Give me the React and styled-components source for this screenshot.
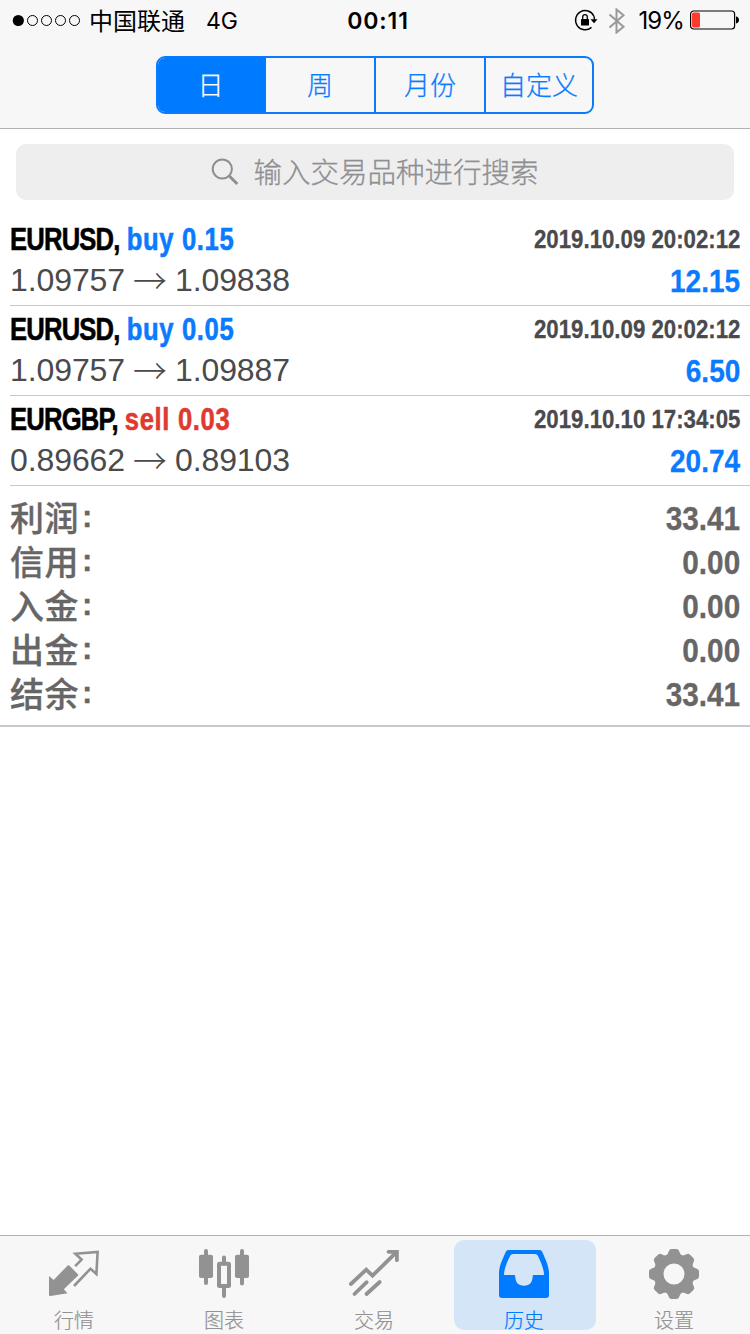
import React from "react";
import styled, { createGlobalStyle } from "styled-components";

const GlobalStyle = createGlobalStyle`
  * {
    box-sizing: border-box;
  }
  body {
    margin: 0;
    background: #fff;
    --cjk-font: "Noto Sans CJK SC", sans-serif;
    --main-font: "Liberation Sans", "Noto Sans CJK SC", sans-serif;
    --status-font: "Inter", "Noto Sans CJK SC", sans-serif;
    font-family: var(--main-font);
  }
`;

const Screen = styled.div`
  width: 750px;
  height: 1334px;
  display: flex;
  flex-direction: column;
  overflow: hidden;
  white-space: nowrap;
`;

const Header = styled.header`
  height: 129px;
  background: #f7f7f7;
  border-bottom: 1px solid #b2b2b2;
`;

const StatusBar = styled.div`
  height: 40px;
  padding: 0 11px 0 12px;
  display: grid;
  grid-template-columns: 1fr auto 1fr;
  align-items: center;
  font-family: var(--status-font);
  font-size: 24px;
  line-height: 38px;
  color: #000;
`;

const StatusLeft = styled.div`
  display: flex;
  align-items: center;
`;

const StatusRight = styled.div`
  display: flex;
  align-items: center;
  justify-content: flex-end;
`;

const Carrier = styled.span`
  margin: 0 21px 0 8px;
  font-family: var(--cjk-font);
`;

const Network = styled.span`
  padding-top: 2px;
  font-size: 23px;
`;

const Clock = styled.span`
  padding: 2px 0 0 5px;
  font-weight: 600;
  font-size: 23px;
  letter-spacing: 0.9px;
`;

const Percent = styled.span`
  padding-top: 2px;
  margin: 0 6px 0 12px;
  font-size: 24px;
  letter-spacing: -0.9px;
`;

const Segments = styled.div`
  width: 438px;
  height: 58px;
  margin: 16px 0 0 156px;
  display: flex;
  border: 2px solid #0a7aff;
  border-radius: 9px;
  overflow: hidden;
`;

const Segment = styled.button`
  width: ${(props) => props.$width}px;
  padding: 0 ${(props) => (props.$active ? "3px" : "0")} 2px 0;
  border: 0;
  border-left: ${(props) => (props.$divided ? "2px solid #0a7aff" : "0")};
  background: ${(props) => (props.$active ? "#007aff" : "transparent")};
  color: ${(props) => (props.$active ? "#fff" : "#0a7aff")};
  font-family: var(--cjk-font);
  font-weight: 300;
  font-size: 26px;
  line-height: 52px;
  -webkit-text-stroke: 0.25px currentColor;
`;

const SearchBox = styled.div`
  height: 56px;
  margin: 15px 16px 16px;
  display: flex;
  align-items: center;
  justify-content: center;
  border-radius: 10px;
  background: #eee;
  color: #8e8e93;

  svg {
    margin-right: 14px;
  }
`;

const Placeholder = styled.span`
  padding-bottom: 3px;
  font-family: var(--cjk-font);
  font-weight: 300;
  font-size: 28.5px;
  line-height: 52px;
  -webkit-text-stroke: 0.3px currentColor;
`;

const Deal = styled.div`
  height: 90px;
  margin-left: 10px;
  padding-right: 10px;
  border-bottom: 1px solid #c8c7cc;
`;

const DealLine = styled.div`
  height: ${(props) => props.$height};
  display: flex;
  align-items: center;
  justify-content: space-between;
`;

/* squeezes the bold sans into a condensed face */
const Condensed = styled.span`
  font-family: var(--main-font);
  font-weight: 700;
  transform: scaleX(${(props) => props.$scale});
  transform-origin: ${(props) => props.$origin || "right"} center;
  -webkit-text-stroke: 0.3px currentColor;
`;

const DealTitle = styled(Condensed)`
  font-size: 32px;
  letter-spacing: -1px;
  color: #000;
  -webkit-text-stroke-width: 0.6px;
`;

const Side = styled.span`
  margin-left: 1px;
  color: ${(props) => (props.$side === "sell" ? "#e03a30" : "#0a7aff")};
  letter-spacing: 0.8px;
  -webkit-text-stroke-color: currentColor;
`;

const DealTime = styled(Condensed)`
  font-size: 26px;
  color: #4a4a4d;
`;

const Prices = styled.span`
  padding-bottom: 2px;
  display: flex;
  align-items: center;
  font-size: 32px;
  line-height: 36px;
  letter-spacing: -0.1px;
  color: #4a4a4d;
`;

const Arrow = styled.span`
  width: 50px;
  text-align: center;
  font-family: var(--cjk-font);
  font-weight: 300;
  font-size: 34px;
  line-height: 36px;
`;

const Profit = styled(Condensed)`
  padding-top: 2px;
  font-size: 32px;
  color: #0a7aff;
`;

const Summary = styled.section`
  height: 241px;
  padding: 10px 10px 0;
  border-bottom: 2px solid #c8c7cc;
`;

const SummaryRow = styled.div`
  height: 44px;
  display: flex;
  align-items: center;
  justify-content: space-between;
  color: #666;
`;

const SummaryLabel = styled.span`
  padding-top: 2px;
  font-family: var(--main-font);
  font-weight: 500;
  font-size: 34px;
  line-height: 42px;
  letter-spacing: 0.5px;
  -webkit-text-stroke: 0.3px currentColor;
`;

const Colon = styled.span`
  padding-left: 3px;
  font-weight: 700;
  font-size: 31px;
  line-height: 1;
  vertical-align: 4px;
`;

const SummaryValue = styled(Condensed)`
  font-size: 34px;
`;

const TabBar = styled.nav`
  height: 99px;
  margin-top: auto;
  padding: 4px 0 4px;
  display: flex;
  background: #f7f7f7;
  border-top: 1px solid #b2b2b2;
`;

const Tab = styled.a`
  width: 142px;
  height: 90px;
  margin-left: ${(props) => (props.$first ? "4px" : "8px")};
  padding: 9px 2px 0 0;
  display: flex;
  flex-direction: column;
  align-items: center;
  flex-shrink: 0;
  border-radius: 10px;
  background: ${(props) => (props.$active ? "#d3e5f7" : "transparent")};
  color: ${(props) => (props.$active ? "#007aff" : "#929292")};

  svg {
    flex-shrink: 0;
  }
`;

const TabLabel = styled.span`
  margin-top: 7px;
  font-family: var(--cjk-font);
  font-weight: 300;
  font-size: 20px;
  line-height: 28px;
  -webkit-text-stroke: 0.2px currentColor;
`;

function SignalDots() {
  return (
    <svg width="69" height="14" viewBox="0 0 69 14">
      <circle cx="6.3" cy="7.5" r="5.6" fill="#000" />
      {[20.5, 34.5, 48.5, 62.5].map((x) => (
        <circle key={x} cx={x} cy="7.5" r="5" fill="none" stroke="#000" />
      ))}
    </svg>
  );
}

function RotationLock() {
  return (
    <svg width="24" height="24" viewBox="0 0 24 24">
      <path
        d="M19.9 8.2A9.6 9.6 0 1 0 17.5 19.4"
        fill="none"
        stroke="#000"
        strokeWidth="1.4"
      />
      <path d="M16.5 11.2h7L20 15.2z" fill="#000" />
      <path d="M19.9 8.2q.6 1.6.5 3.5" fill="none" stroke="#000" strokeWidth="1.4" />
      <rect x="7" y="11" width="8" height="6.5" rx="0.6" fill="#000" />
      <path
        d="M8.7 11.5V9a2.3 2.3 0 0 1 4.6 0v2.5"
        fill="none"
        stroke="#000"
        strokeWidth="1.3"
      />
    </svg>
  );
}

const BluetoothMark = styled.svg`
  margin: 1px 0 0 10px;
`;

function Bluetooth() {
  return (
    <BluetoothMark width="18" height="26" viewBox="0 0 18 26">
      <path
        d="M1.500 6.500l14 12.300-7 5.700v-23l7 5.700-14 12.300"
        fill="none"
        stroke="#999"
        strokeWidth="2"
      />
    </BluetoothMark>
  );
}

function Battery() {
  return (
    <svg width="49" height="20" viewBox="0 0 49 20">
      <rect x="0.600" y="1" width="44" height="18" rx="3" fill="none" stroke="#000" strokeWidth="1.200" />
      <rect x="2" y="2.500" width="8" height="15" rx="1.500" fill="#ff3b30" />
      <path d="M46 6.500c4 .3 4 6.700 0 7z" fill="#000" />
    </svg>
  );
}

function SearchIcon() {
  return (
    <svg width="28" height="28" viewBox="0 0 28 28">
      <circle cx="11.300" cy="11" r="9.600" fill="none" stroke="#8e8e93" strokeWidth="2" />
      <path d="M18 17.700l8.300 8.300" stroke="#8e8e93" strokeWidth="3" />
    </svg>
  );
}

function QuotesIcon() {
  return (
    <>
      <path
        d="M0 27l4.600 4L18.700 16.500q.8-.7 1.600 0l8.600 8.700q.7.8 0 1.600L14.800 40.300l3.700 3.900L1.500 47Q0 47.200 0 45.500z"
        fill="currentColor"
      />
      <path
        d="M26.200 17.200l6.400-6.600-6.200-5.900L48.600 3l-1.200 22-5.900-5.300L25 37"
        fill="none"
        stroke="currentColor"
        strokeWidth="2.600"
      />
    </>
  );
}

function ChartsIcon() {
  return (
    <>
      <g stroke="currentColor" strokeWidth="4" strokeLinecap="round">
        <path d="M7 2v32M43 2v32.500M25 8.500v6M25 38v9" />
      </g>
      <rect x="0" y="5.700" width="14" height="23.300" rx="2" fill="currentColor" />
      <rect x="36" y="5.700" width="14" height="23.300" rx="2" fill="currentColor" />
      <rect x="20" y="14.700" width="10" height="22.300" rx="0.500" fill="none" stroke="currentColor" strokeWidth="4" />
    </>
  );
}

function TradeIcon() {
  return (
    <g fill="none" stroke="currentColor" strokeWidth="3.800" strokeLinecap="round">
      <path d="M1.900 35l15.300-14.300 6.300 6L47 3.600" />
      <path d="M39.500 2.800h8.400v8.400" />
      <path d="M5.500 45l12.200-11.800M17.500 45l13.200-12" />
    </g>
  );
}

function HistoryIcon() {
  return (
    <path
      fillRule="evenodd"
      fill="currentColor"
      d="M9.500 1h31q2 0 2.800 2C46 9.500 50 17 50 24v22q0 3-3 3H3q-3 0-3-3V24C0 17 4 9.500 6.700 3q.8-2 2.800-2zM14 5q-2 0-2.700 1.500C8 13 5 20.500 5 25.500q0 .5.500.5H15.200q1 0 1 1C16.300 33 19 36.800 25 36.800S33.500 33 33.700 27q0-1 1-1h9.700q.6 0 .6-.5C45 20.500 42 13 38.700 6.500Q38 5 36 5z"
    />
  );
}

function SettingsIcon() {
  return (
    <g fill="none" stroke="currentColor">
      <circle cx="25" cy="25" r="15.400" strokeWidth="9.800" />
      {[0, 45, 90, 135, 180, 225, 270, 315].map((angle) => (
        <path
          key={angle}
          d="M17.200 6.600Q19 5 19.800 2.200 20.400 0 22.600 0h4.800Q29.600 0 30.200 2.200 31 5 32.800 6.600L29 11h-8z"
          fill="currentColor"
          stroke="none"
          transform={`rotate(${angle} 25 25)`}
        />
      ))}
    </g>
  );
}

const periods = [
  { label: "日", width: 108, active: true },
  { label: "周", width: 108 },
  { label: "月份", width: 110, divided: true },
  { label: "自定义", width: 108, divided: true },
];

const deals = [
  { symbol: "EURUSD", side: "buy", volume: "0.15", open: "1.09757", close: "1.09838", time: "2019.10.09 20:02:12", profit: "12.15" },
  { symbol: "EURUSD", side: "buy", volume: "0.05", open: "1.09757", close: "1.09887", time: "2019.10.09 20:02:12", profit: "6.50" },
  { symbol: "EURGBP", side: "sell", volume: "0.03", open: "0.89662", close: "0.89103", time: "2019.10.10 17:34:05", profit: "20.74" },
];

const totals = [
  { label: "利润", value: "33.41" },
  { label: "信用", value: "0.00" },
  { label: "入金", value: "0.00" },
  { label: "出金", value: "0.00" },
  { label: "结余", value: "33.41" },
];

const tabs = [
  { label: "行情", Icon: QuotesIcon },
  { label: "图表", Icon: ChartsIcon },
  { label: "交易", Icon: TradeIcon },
  { label: "历史", Icon: HistoryIcon, active: true },
  { label: "设置", Icon: SettingsIcon },
];

function DealItem(props) {
  return (
    <Deal>
      <DealLine $height="46px">
        <DealTitle $scale={0.8} $origin="left">
          {props.symbol},{" "}
          <Side $side={props.side}>
            {props.side} {props.volume}
          </Side>
        </DealTitle>
        <DealTime $scale={0.855}>{props.time}</DealTime>
      </DealLine>
      <DealLine $height="37px">
        <Prices>
          <span>{props.open}</span>
          <Arrow>→</Arrow>
          <span>{props.close}</span>
        </Prices>
        <Profit $scale={0.875}>{props.profit}</Profit>
      </DealLine>
    </Deal>
  );
}

function App() {
  return (
    <Screen>
      <GlobalStyle />
      <Header>
        <StatusBar>
          <StatusLeft>
            <SignalDots />
            <Carrier>中国联通</Carrier>
            <Network>4G</Network>
          </StatusLeft>
          <Clock>00:11</Clock>
          <StatusRight>
            <RotationLock />
            <Bluetooth />
            <Percent>19%</Percent>
            <Battery />
          </StatusRight>
        </StatusBar>
        <Segments>
          {periods.map((period) => (
            <Segment
              key={period.label}
              $width={period.width}
              $active={period.active}
              $divided={period.divided}
            >
              {period.label}
            </Segment>
          ))}
        </Segments>
      </Header>
      <SearchBox>
        <SearchIcon />
        <Placeholder>输入交易品种进行搜索</Placeholder>
      </SearchBox>
      {deals.map((deal, index) => (
        <DealItem key={index} {...deal} />
      ))}
      <Summary>
        {totals.map(({ label, value }) => (
          <SummaryRow key={label}>
            <SummaryLabel>
              {label}
              <Colon>:</Colon>
            </SummaryLabel>
            <SummaryValue $scale={0.875}>{value}</SummaryValue>
          </SummaryRow>
        ))}
      </Summary>
      <TabBar>
        {tabs.map(({ label, Icon, active }, index) => (
          <Tab key={label} $active={active} $first={index === 0}>
            <svg width="50" height="50" viewBox="0 0 50 50">
              <Icon />
            </svg>
            <TabLabel>{label}</TabLabel>
          </Tab>
        ))}
      </TabBar>
    </Screen>
  );
}

export default App;
